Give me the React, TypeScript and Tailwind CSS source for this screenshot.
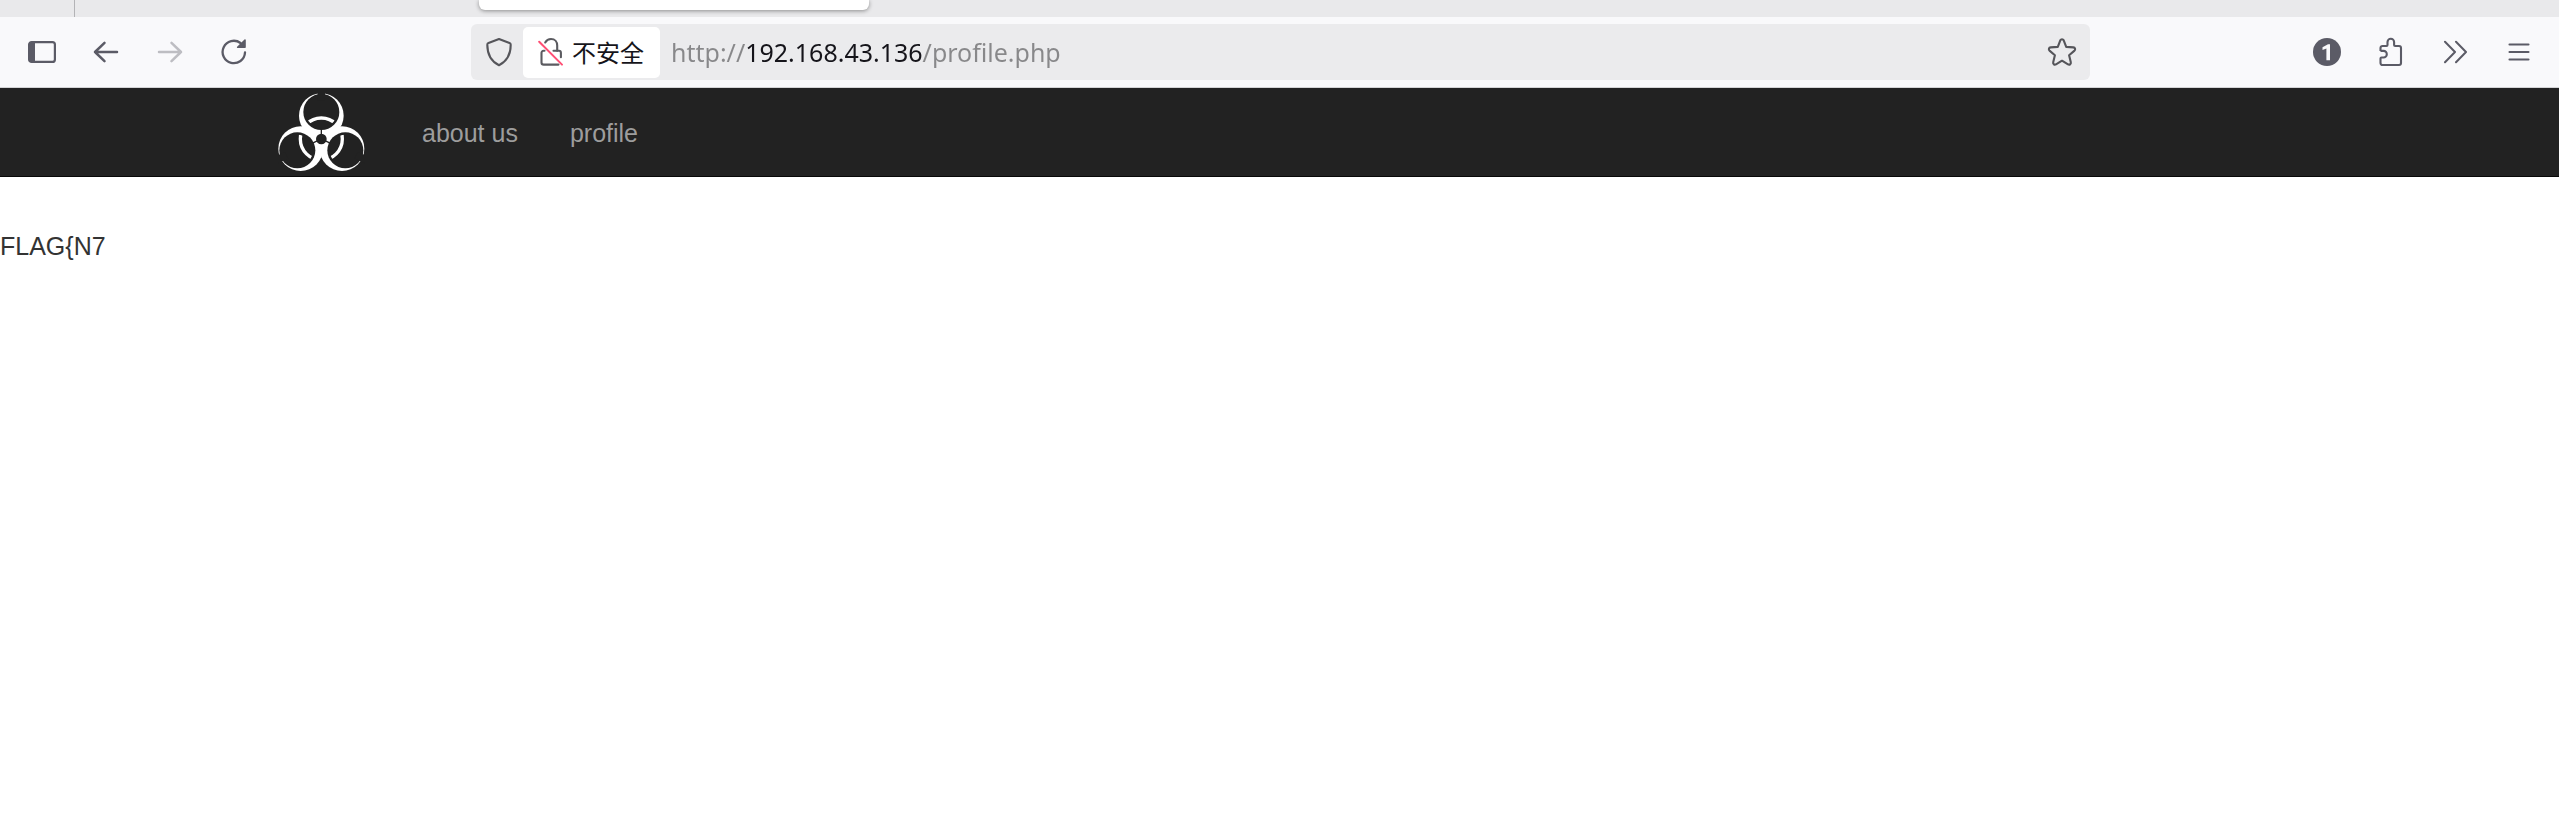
import React from 'react';

const SidebarIcon = () => (
  <svg width="28" height="22" viewBox="0 0 28 22" fill="none">
    <rect x="1.100" y="1.100" width="25.800" height="19.800" rx="2.500" stroke="#5b5b66" strokeWidth="2.200" />
    <path d="M1 3a2 2 0 0 1 2-2h4v20H3a2 2 0 0 1-2-2z" fill="#5b5b66" />
  </svg>
);

const ArrowIcon = ({ className = '' }: { className?: string }) => (
  <svg width="26" height="22" viewBox="0 0 26 22" fill="none" stroke="currentColor" strokeWidth="2.500" strokeLinecap="round" strokeLinejoin="round" className={className}>
    <path d="M24 11H2M11.500 1.800L2 11l9.500 9.200" />
  </svg>
);

const ReloadIcon = () => (
  <svg width="28" height="28" viewBox="0 0 28 28" fill="none">
    <path d="M25 14.500A11.200 11.200 0 1 1 20.500 5" stroke="#5b5b66" strokeWidth="2.300" strokeLinecap="round" />
    <path d="M25.800 2v7.300a.8.8 0 0 1-.8.8h-7.400c-.7 0-1-.8-.5-1.300l7.400-7.400c.5-.4 1.300-.1 1.300.6z" fill="#5b5b66" />
  </svg>
);

const ShieldIcon = () => (
  <svg width="28" height="30" viewBox="0 0 28 30" fill="none" stroke="#55555a" strokeWidth="2.100" strokeLinejoin="round">
    <path d="M14 2L24.500 5.900Q25.700 6.400 25.700 7.700C25.700 16 23.400 23.500 14 28.200C4.600 23.500 2.300 16 2.300 7.700Q2.300 6.400 3.500 5.900Z" />
  </svg>
);

const InsecureIcon = () => (
  <svg width="26" height="30" viewBox="0 0 26 30" fill="none" strokeLinecap="round">
    <g stroke="#5b5b60" strokeWidth="2.100">
      <path d="M7.200 5.500C8.500 3.200 10.700 2 13 2c4 0 6.200 3 6.200 6.500v5.300" />
      <path d="M15.500 13.800h5.500a1.900 1.900 0 0 1 1.900 1.900v4.500M6.500 13.800h-1a2 2 0 0 0-2 2v9.600a2.200 2.200 0 0 0 2.200 2.200h14.800" />
    </g>
    <path d="M1.200 4.800L24 27.600" stroke="#ff4f74" strokeWidth="2" />
  </svg>
);

const StarIcon = () => (
  <svg width="30" height="30" viewBox="0 0 30 30" fill="none" stroke="#55555a" strokeWidth="2.100" strokeLinejoin="round">
    <path d="M13.300 3.300c.7-1.400 2.700-1.400 3.400 0l2.500 6.600 7.200.5c1.700.2 2.300 2.100 1.100 3.200l-5.400 4.700 1.700 7c.4 1.700-1.300 2.900-2.800 2L15 23.700l-6 3.600c-1.500.9-3.200-.3-2.800-2l1.700-7-5.400-4.700c-1.200-1.100-.6-3 1.100-3.200l7.200-.5z" />
  </svg>
);

const BadgeIcon = () => (
  <svg width="28" height="28" viewBox="0 0 28 28">
    <circle cx="14" cy="14" r="14" fill="#5b5b66" />
    <path d="M9.500 9.300L15 6.200h2v16h-3.600V10.600l-3.900 1.500z" fill="#f9f9fb" />
  </svg>
);

const PuzzleIcon = () => (
  <svg width="26" height="30" viewBox="0 0 26 30" fill="none" stroke="#5b5b66" strokeWidth="2.100" strokeLinejoin="round">
    <path d="M2.500 14V11a2 2 0 0 1 2-2H8.500q1 0 1-1V5a3.300 3.300 0 0 1 6.600 0V8q0 1 1 1H21a2 2 0 0 1 2 2V26a2 2 0 0 1-2 2H4.500a2 2 0 0 1-2-2V21.500q0-1 1-1H5.500a3.300 3.300 0 0 0 0-6.600H2.500" />
  </svg>
);

const ChevronsIcon = () => (
  <svg width="24" height="24" viewBox="0 0 24 24" fill="none" stroke="#5b5b66" strokeWidth="2" strokeLinecap="round" strokeLinejoin="round">
    <path d="M2 1.800L12 12L2 22.200M13 1.800L23 12L13 22.200" />
  </svg>
);

const MenuIcon = () => (
  <svg width="22" height="20" viewBox="0 0 22 20" stroke="#5b5b66" strokeWidth="2.100" strokeLinecap="round">
    <path d="M1.500 2.500h19M1.500 10h19M1.500 17.500h19" />
  </svg>
);

const LOBES = [
  { outer: [129, 67], inner: [129, 56], notch: 0 },
  { outer: [191, 166], inner: [201, 171], notch: 115 },
  { outer: [67, 166], inner: [57, 171], notch: 245 },
];

const BiohazardLogo = () => (
  <svg width="87" height="79" viewBox="-1 -1 261 237">
    <clipPath id="lobes">
      {LOBES.map(({ inner: [x, y] }) => (
        <circle key={x} cx={x} cy={y} r="47" />
      ))}
    </clipPath>
    {LOBES.map(({ outer: [x, y] }) => (
      <circle key={x} cx={x} cy={y} r="67" fill="#fff" />
    ))}
    {LOBES.map(({ inner: [x, y] }) => (
      <circle key={x} cx={x} cy={y} r="54" fill="#222" />
    ))}
    <circle cx="129" cy="137" r="63" fill="none" stroke="#fff" strokeWidth="10" clipPath="url(#lobes)" />
    <circle cx="129" cy="137" r="16" fill="#222" />
    {LOBES.map(({ notch }) => (
      <g key={notch} transform={`rotate(${notch} 129 137)`} fill="#222">
        <rect x="118" y="-12" width="22" height="34" />
        <rect x="127" y="108" width="4" height="24" />
      </g>
    ))}
  </svg>
);

const ToolButton = ({ label, disabled, children }: { label: string; disabled?: boolean; children: React.ReactNode }) => (
  <button type="button" aria-label={label} disabled={disabled} className="w-16 h-14 flex items-center justify-center shrink-0">
    {children}
  </button>
);

const BrowserChrome = () => (
  <header>
    <div className="h-[17px] bg-[#e9e9eb] flex items-start overflow-hidden">
      <div className="w-[75px] h-full border-r border-[#b3b3b6]" />
      <div className="ml-[404px] w-[390px] h-[10px] bg-white rounded-b-md shadow-[0_1px_4px_rgba(0,0,0,0.4)]" />
    </div>
    <div className="bg-[#f9f9fb] border-b border-[#d4d4d6] flex items-center py-[7px] pl-[10px] pr-2">
      <ToolButton label="Sidebar"><SidebarIcon /></ToolButton>
      <ToolButton label="Back"><ArrowIcon className="text-[#5b5b66]" /></ToolButton>
      <ToolButton label="Forward" disabled><ArrowIcon className="text-[#bdbdc2] rotate-180" /></ToolButton>
      <ToolButton label="Reload"><ReloadIcon /></ToolButton>

      <div className="flex-1 min-w-0 mx-[205px] h-14 bg-[#ebebed] rounded-md flex items-center">
        <button type="button" aria-label="Tracking protection" className="w-[52px] h-full pl-[3px] flex items-center justify-center shrink-0">
          <ShieldIcon />
        </button>
        <button type="button" className="h-[51px] pl-[15px] pr-4 bg-white rounded-[5px] flex items-center gap-2 shrink-0 text-[24px] text-[#15141a] font-['Noto_Sans_CJK_SC',sans-serif]">
          <InsecureIcon />
          不安全
        </button>
        <input
          type="text"
          aria-label="Address"
          defaultValue="http://192.168.43.136/profile.php"
          className="flex-1 min-w-0 h-full ml-[11px] outline-none text-[25px] font-['Noto_Sans',sans-serif] text-transparent bg-clip-text bg-[linear-gradient(to_right,#88888a_75px,#15141a_75px,#15141a_252px,#88888a_252px)]"
        />
        <button type="button" aria-label="Bookmark" className="w-14 h-full flex items-center justify-center shrink-0">
          <StarIcon />
        </button>
      </div>

      <ToolButton label="Notifications"><BadgeIcon /></ToolButton>
      <ToolButton label="Extensions"><PuzzleIcon /></ToolButton>
      <ToolButton label="More tools"><ChevronsIcon /></ToolButton>
      <ToolButton label="Menu"><MenuIcon /></ToolButton>
    </div>
  </header>
);

const navItems = [
  { label: 'about us', href: '#about' },
  { label: 'profile', href: '#profile' },
];

const Navbar = () => (
  <nav className="h-[89px] bg-[#222] border-b border-[#080808]">
    <div className="max-w-[2047px] h-full mx-auto flex items-center">
      <a href="#" aria-label="Home" className="ml-[22px] mr-[31px]">
        <BiohazardLogo />
      </a>
      {navItems.map((item) => (
        <a key={item.label} href={item.href} className="px-[26px] pt-[3px] text-[25px] text-[#9d9d9d]">
          {item.label}
        </a>
      ))}
    </div>
  </nav>
);

export default function App() {
  return (
    <div className="min-h-screen bg-white font-['Liberation_Sans',Arial,sans-serif]">
      <BrowserChrome />
      <Navbar />
      <main className="pt-[52px] text-[25px] leading-[35px] text-[#333]">FLAG{'{'}N7</main>
    </div>
  );
}
